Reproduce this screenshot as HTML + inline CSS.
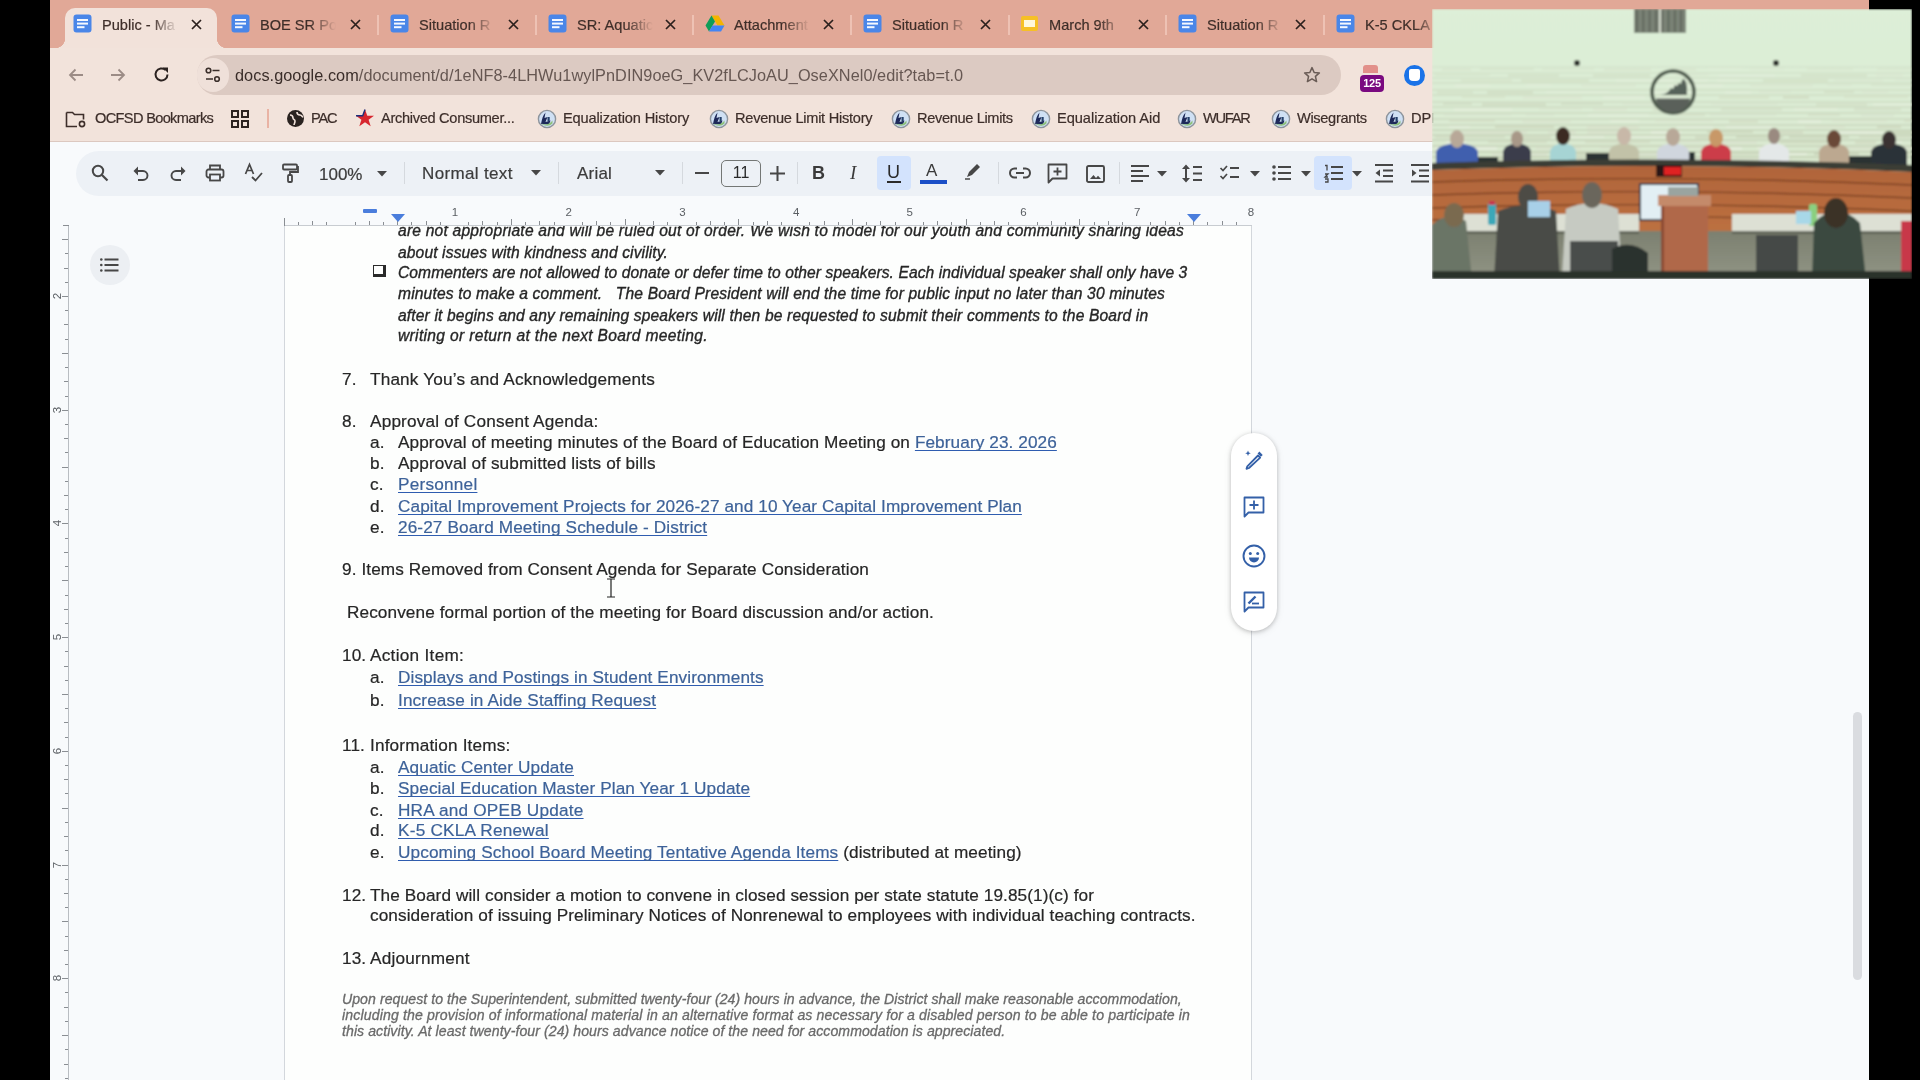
<!DOCTYPE html><html><head><meta charset="utf-8"><style>
*{margin:0;padding:0;box-sizing:border-box}
html,body{width:1920px;height:1080px;overflow:hidden;background:#f9fbfd;font-family:"Liberation Sans",sans-serif;position:relative}
.a{position:absolute}
svg{position:absolute;overflow:visible}
.tab{position:absolute;top:8px;height:40px;font-size:14.6px;color:#3b2a26;white-space:nowrap}
.tt{position:absolute;top:17px;overflow:hidden;white-space:nowrap;font-size:14.6px;color:#3e2e29;-webkit-text-stroke:0.2px #3e2e29;
 -webkit-mask-image:linear-gradient(90deg,#000 65%,transparent 100%)}
.tx{position:absolute;top:13px;font-size:18px;color:#2a1f1c;line-height:20px}
.sep{position:absolute;top:15px;width:2px;height:20px;background:#eec2b4}
.bm{position:absolute;top:110px;font-size:14.6px;color:#3d2e2a;-webkit-text-stroke:0.2px #3d2e2a;white-space:nowrap;line-height:16px}
.doc{position:absolute;font-size:17.2px;color:#262626;-webkit-text-stroke:0.2px #262626;white-space:nowrap;line-height:20px}
.lk{color:#3d6299;-webkit-text-stroke-color:#3d6299;text-decoration:underline;text-decoration-skip-ink:none;text-decoration-color:#2f5db0;text-underline-offset:2px;text-decoration-thickness:1.3px}
.it{position:absolute;font-style:italic;font-size:15.6px;color:#262626;-webkit-text-stroke:0.35px #262626;white-space:nowrap;line-height:20px}
.ft{position:absolute;font-style:italic;font-size:14.1px;color:#6a6a6a;-webkit-text-stroke:0.3px #6a6a6a;white-space:nowrap;line-height:16px}
</style></head><body><div id="root" style="position:absolute;left:0;top:0;width:1920px;height:1080px;overflow:hidden;filter:blur(0.4px)">
<div class="a" style="left:0;top:0;width:1920px;height:48px;background:#e1a897"></div>
<div class="a" style="left:65px;top:8px;width:152px;height:42px;background:#f2e2da;border-radius:10px 10px 0 0"></div>
<div class="a" style="left:55px;top:38px;width:10px;height:10px;background:radial-gradient(circle at 0 0,#e1a897 10px,#f2e2da 10.5px)"></div>
<div class="a" style="left:217px;top:38px;width:10px;height:10px;background:radial-gradient(circle at 100% 0,#e1a897 10px,#f2e2da 10.5px)"></div>
<svg style="left:73px;top:14px" width="19" height="19" viewBox="0 0 19 19"><rect x="0.5" y="0.5" width="18" height="18" rx="3" fill="#4a86e8"/><rect x="4" y="5" width="11" height="2" fill="#f4f8ff"/><rect x="4" y="8.6" width="11" height="2" fill="#f4f8ff"/><rect x="4" y="12.2" width="7.5" height="2" fill="#f4f8ff"/></svg>
<div class="tt" style="left:102px;width:76px">Public - Ma</div>
<svg style="left:191px;top:19px" width="11" height="11" viewBox="0 0 11 11"><path d="M1 1L10 10M10 1L1 10" stroke="#2b201d" stroke-width="1.7"/></svg>
<svg style="left:231px;top:14px" width="19" height="19" viewBox="0 0 19 19"><rect x="0.5" y="0.5" width="18" height="18" rx="3" fill="#4a86e8"/><rect x="4" y="5" width="11" height="2" fill="#f4f8ff"/><rect x="4" y="8.6" width="11" height="2" fill="#f4f8ff"/><rect x="4" y="12.2" width="7.5" height="2" fill="#f4f8ff"/></svg>
<div class="tt" style="left:260px;width:76px">BOE SR Pol</div>
<svg style="left:350px;top:19px" width="11" height="11" viewBox="0 0 11 11"><path d="M1 1L10 10M10 1L1 10" stroke="#2b201d" stroke-width="1.7"/></svg>
<svg style="left:390px;top:14px" width="19" height="19" viewBox="0 0 19 19"><rect x="0.5" y="0.5" width="18" height="18" rx="3" fill="#4a86e8"/><rect x="4" y="5" width="11" height="2" fill="#f4f8ff"/><rect x="4" y="8.6" width="11" height="2" fill="#f4f8ff"/><rect x="4" y="12.2" width="7.5" height="2" fill="#f4f8ff"/></svg>
<div class="tt" style="left:419px;width:76px">Situation R</div>
<svg style="left:508px;top:19px" width="11" height="11" viewBox="0 0 11 11"><path d="M1 1L10 10M10 1L1 10" stroke="#2b201d" stroke-width="1.7"/></svg>
<svg style="left:548px;top:14px" width="19" height="19" viewBox="0 0 19 19"><rect x="0.5" y="0.5" width="18" height="18" rx="3" fill="#4a86e8"/><rect x="4" y="5" width="11" height="2" fill="#f4f8ff"/><rect x="4" y="8.6" width="11" height="2" fill="#f4f8ff"/><rect x="4" y="12.2" width="7.5" height="2" fill="#f4f8ff"/></svg>
<div class="tt" style="left:577px;width:76px">SR: Aquatic</div>
<svg style="left:665px;top:19px" width="11" height="11" viewBox="0 0 11 11"><path d="M1 1L10 10M10 1L1 10" stroke="#2b201d" stroke-width="1.7"/></svg>
<svg style="left:705px;top:15px" width="20" height="17" viewBox="0 0 20 17"><path d="M6.5 0.5h7l6 10h-7z" fill="#f4b400"/><path d="M6.5 0.5l-6 10 3.5 6 6-10z" fill="#0f9d58"/><path d="M4 16.5h12l3.5-6h-12z" fill="#4285f4"/></svg>
<div class="tt" style="left:734px;width:76px">Attachment</div>
<svg style="left:823px;top:19px" width="11" height="11" viewBox="0 0 11 11"><path d="M1 1L10 10M10 1L1 10" stroke="#2b201d" stroke-width="1.7"/></svg>
<svg style="left:863px;top:14px" width="19" height="19" viewBox="0 0 19 19"><rect x="0.5" y="0.5" width="18" height="18" rx="3" fill="#4a86e8"/><rect x="4" y="5" width="11" height="2" fill="#f4f8ff"/><rect x="4" y="8.6" width="11" height="2" fill="#f4f8ff"/><rect x="4" y="12.2" width="7.5" height="2" fill="#f4f8ff"/></svg>
<div class="tt" style="left:892px;width:76px">Situation R</div>
<svg style="left:980px;top:19px" width="11" height="11" viewBox="0 0 11 11"><path d="M1 1L10 10M10 1L1 10" stroke="#2b201d" stroke-width="1.7"/></svg>
<div class="a" style="left:1021px;top:16px;width:17px;height:15px;background:#f6c026;border-radius:2px"><div class="a" style="left:3px;top:4px;width:11px;height:7px;background:#fff8dc"></div></div>
<div class="tt" style="left:1049px;width:76px">March 9th</div>
<svg style="left:1138px;top:19px" width="11" height="11" viewBox="0 0 11 11"><path d="M1 1L10 10M10 1L1 10" stroke="#2b201d" stroke-width="1.7"/></svg>
<svg style="left:1178px;top:14px" width="19" height="19" viewBox="0 0 19 19"><rect x="0.5" y="0.5" width="18" height="18" rx="3" fill="#4a86e8"/><rect x="4" y="5" width="11" height="2" fill="#f4f8ff"/><rect x="4" y="8.6" width="11" height="2" fill="#f4f8ff"/><rect x="4" y="12.2" width="7.5" height="2" fill="#f4f8ff"/></svg>
<div class="tt" style="left:1207px;width:76px">Situation R</div>
<svg style="left:1295px;top:19px" width="11" height="11" viewBox="0 0 11 11"><path d="M1 1L10 10M10 1L1 10" stroke="#2b201d" stroke-width="1.7"/></svg>
<svg style="left:1336px;top:14px" width="19" height="19" viewBox="0 0 19 19"><rect x="0.5" y="0.5" width="18" height="18" rx="3" fill="#4a86e8"/><rect x="4" y="5" width="11" height="2" fill="#f4f8ff"/><rect x="4" y="8.6" width="11" height="2" fill="#f4f8ff"/><rect x="4" y="12.2" width="7.5" height="2" fill="#f4f8ff"/></svg>
<div class="tt" style="left:1365px;width:76px">K-5 CKLA R</div>
<div class="sep" style="left:377px"></div>
<div class="sep" style="left:535px"></div>
<div class="sep" style="left:692px"></div>
<div class="sep" style="left:850px"></div>
<div class="sep" style="left:1008px"></div>
<div class="sep" style="left:1165px"></div>
<div class="sep" style="left:1323px"></div>
<div class="a" style="left:0;top:48px;width:1920px;height:93px;background:#f2e3db"></div>
<div class="a" style="left:0;top:141px;width:1920px;height:1px;background:#dcc8c0"></div>
<svg style="left:67px;top:66px" width="18" height="18" viewBox="0 0 18 18"><path d="M16 9H3M8.5 3.5L3 9l5.5 5.5" stroke="#9c8c86" stroke-width="1.8" fill="none"/></svg>
<svg style="left:109px;top:66px" width="18" height="18" viewBox="0 0 18 18"><path d="M2 9h13M9.5 3.5L15 9l-5.5 5.5" stroke="#9c8c86" stroke-width="1.8" fill="none"/></svg>
<svg style="left:152px;top:65px" width="19" height="19" viewBox="0 0 19 19"><path d="M15.5 9.5A6 6 0 1 1 13.6 5.1" stroke="#2b2220" stroke-width="2" fill="none"/><path d="M10.5 2.5h5.5v5.5z" fill="#2b2220"/></svg>
<div class="a" style="left:197px;top:55px;width:1144px;height:40px;background:#dccac2;border-radius:20px"></div>
<div class="a" style="left:197px;top:58px;width:32px;height:34px;background:#efe0d9;border-radius:17px"></div>
<svg style="left:204px;top:66px" width="18" height="18" viewBox="0 0 18 18"><circle cx="4.5" cy="4.5" r="2.3" stroke="#3a2e2a" stroke-width="1.6" fill="none"/><path d="M8.5 4.5h7M2 13h7" stroke="#3a2e2a" stroke-width="1.6"/><circle cx="13" cy="13" r="2.3" stroke="#3a2e2a" stroke-width="1.6" fill="none"/></svg>
<div class="a" style="left:235px;top:65px;font-size:16.3px;color:#3a2d29;white-space:nowrap;line-height:20px;letter-spacing:0.048px">docs.google.com<span style="color:#665752">/document/d/1eNF8-4LHWu1wylPnDIN9oeG_KV2fLCJoAU_OseXNel0/edit?tab=t.0</span></div>
<svg style="left:1303px;top:66px" width="18" height="18" viewBox="0 0 20 20"><path d="M10 1.8l2.4 5.4 5.8.5-4.4 3.9 1.3 5.7L10 14.3l-5.1 3 1.3-5.7L1.8 7.7l5.8-.5z" stroke="#6a5c56" stroke-width="1.7" fill="none" stroke-linejoin="round"/></svg>
<div class="a" style="left:1363px;top:65px;width:15px;height:8px;background:#e2908a;border-radius:3px 3px 0 0"></div>
<div class="a" style="left:1360px;top:75px;width:24px;height:17px;background:#7a0a80;border-radius:4px;color:#fff;font-size:11px;font-weight:bold;text-align:center;line-height:17px;letter-spacing:-0.3px">125</div>
<div class="a" style="left:1404px;top:65px;width:21px;height:21px;border-radius:50%;background:#1a73e8"><div class="a" style="left:5px;top:4px;width:11px;height:12px;background:#fff;border-radius:2px 2px 4px 4px"></div></div>
<svg style="left:65px;top:109px" width="22" height="20" viewBox="0 0 22 20"><path d="M1.5 3.5h6l2 2h9v5M12 17.5H1.5v-14" stroke="#3d2e2a" stroke-width="1.6" fill="none"/><circle cx="17" cy="15" r="2.6" stroke="#3d2e2a" stroke-width="1.6" fill="none"/></svg>
<div class="bm" style="left:95px;letter-spacing:-0.664px">OCFSD Bookmarks</div>
<svg style="left:231px;top:110px" width="18" height="18" viewBox="0 0 18 18"><rect x="1" y="1" width="6" height="6" stroke="#2d2320" stroke-width="2" fill="none"/><rect x="11" y="1" width="6" height="6" stroke="#2d2320" stroke-width="2" fill="none"/><rect x="1" y="11" width="6" height="6" stroke="#2d2320" stroke-width="2" fill="none"/><rect x="11" y="11" width="6" height="6" stroke="#2d2320" stroke-width="2" fill="none"/></svg>
<div class="a" style="left:267px;top:109px;width:2px;height:19px;background:#e9b3a4"></div>
<div class="a" style="left:287px;top:110px;width:17px;height:17px;border-radius:50%;background:#2a2320"></div>
<svg style="left:287px;top:110px" width="17" height="17" viewBox="0 0 17 17"><path d="M3 5c2 0 3 1 3 3s2 1 2 3-1 3-1 4M10 2c0 2 1 3 3 3s2 2 3 2" stroke="#f2e3db" stroke-width="1.6" fill="none"/></svg>
<div class="bm" style="left:311px;letter-spacing:-1.250px">PAC</div>
<svg style="left:355px;top:109px" width="20" height="19" viewBox="0 0 20 19"><path d="M10 0.5l2.3 6.2H19l-5.4 4 2.1 6.6L10 13.3l-5.7 4 2.1-6.6L1 6.7h6.7z" fill="#d7262e"/><path d="M1 6.7h6.7L10 0.5" stroke="#1b2f7a" stroke-width="1.4" fill="none"/></svg>
<div class="bm" style="left:381px;letter-spacing:-0.305px">Archived Consumer...</div>
<svg style="left:537px;top:109px" width="20" height="20" viewBox="0 0 20 20"><circle cx="10" cy="10" r="8.6" fill="#cfe0f4" stroke="#8d949c" stroke-width="1.4"/><path d="M4 15c1-5 2-9 4.5-11.5L7.5 9l3-1-2 5 5-1.5-1.5 4z" fill="#1e2a5a"/><path d="M4.5 14.5q6 3 11-3v3q-4 4-10 1z" fill="#8dc07a"/><rect x="10.5" y="8" width="2.2" height="4" fill="#23406a"/></svg>
<div class="bm" style="left:563px;letter-spacing:-0.147px">Equalization History</div>
<svg style="left:709px;top:109px" width="20" height="20" viewBox="0 0 20 20"><circle cx="10" cy="10" r="8.6" fill="#cfe0f4" stroke="#8d949c" stroke-width="1.4"/><path d="M4 15c1-5 2-9 4.5-11.5L7.5 9l3-1-2 5 5-1.5-1.5 4z" fill="#1e2a5a"/><path d="M4.5 14.5q6 3 11-3v3q-4 4-10 1z" fill="#8dc07a"/><rect x="10.5" y="8" width="2.2" height="4" fill="#23406a"/></svg>
<div class="bm" style="left:735px;letter-spacing:-0.260px">Revenue Limit History</div>
<svg style="left:891px;top:109px" width="20" height="20" viewBox="0 0 20 20"><circle cx="10" cy="10" r="8.6" fill="#cfe0f4" stroke="#8d949c" stroke-width="1.4"/><path d="M4 15c1-5 2-9 4.5-11.5L7.5 9l3-1-2 5 5-1.5-1.5 4z" fill="#1e2a5a"/><path d="M4.5 14.5q6 3 11-3v3q-4 4-10 1z" fill="#8dc07a"/><rect x="10.5" y="8" width="2.2" height="4" fill="#23406a"/></svg>
<div class="bm" style="left:917px;letter-spacing:-0.346px">Revenue Limits</div>
<svg style="left:1031px;top:109px" width="20" height="20" viewBox="0 0 20 20"><circle cx="10" cy="10" r="8.6" fill="#cfe0f4" stroke="#8d949c" stroke-width="1.4"/><path d="M4 15c1-5 2-9 4.5-11.5L7.5 9l3-1-2 5 5-1.5-1.5 4z" fill="#1e2a5a"/><path d="M4.5 14.5q6 3 11-3v3q-4 4-10 1z" fill="#8dc07a"/><rect x="10.5" y="8" width="2.2" height="4" fill="#23406a"/></svg>
<div class="bm" style="left:1057px;letter-spacing:-0.033px">Equalization Aid</div>
<svg style="left:1177px;top:109px" width="20" height="20" viewBox="0 0 20 20"><circle cx="10" cy="10" r="8.6" fill="#cfe0f4" stroke="#8d949c" stroke-width="1.4"/><path d="M4 15c1-5 2-9 4.5-11.5L7.5 9l3-1-2 5 5-1.5-1.5 4z" fill="#1e2a5a"/><path d="M4.5 14.5q6 3 11-3v3q-4 4-10 1z" fill="#8dc07a"/><rect x="10.5" y="8" width="2.2" height="4" fill="#23406a"/></svg>
<div class="bm" style="left:1203px;letter-spacing:-1.250px">WUFAR</div>
<svg style="left:1271px;top:109px" width="20" height="20" viewBox="0 0 20 20"><circle cx="10" cy="10" r="8.6" fill="#cfe0f4" stroke="#8d949c" stroke-width="1.4"/><path d="M4 15c1-5 2-9 4.5-11.5L7.5 9l3-1-2 5 5-1.5-1.5 4z" fill="#1e2a5a"/><path d="M4.5 14.5q6 3 11-3v3q-4 4-10 1z" fill="#8dc07a"/><rect x="10.5" y="8" width="2.2" height="4" fill="#23406a"/></svg>
<div class="bm" style="left:1297px;letter-spacing:-0.333px">Wisegrants</div>
<svg style="left:1385px;top:109px" width="20" height="20" viewBox="0 0 20 20"><circle cx="10" cy="10" r="8.6" fill="#cfe0f4" stroke="#8d949c" stroke-width="1.4"/><path d="M4 15c1-5 2-9 4.5-11.5L7.5 9l3-1-2 5 5-1.5-1.5 4z" fill="#1e2a5a"/><path d="M4.5 14.5q6 3 11-3v3q-4 4-10 1z" fill="#8dc07a"/><rect x="10.5" y="8" width="2.2" height="4" fill="#23406a"/></svg>
<div class="bm" style="left:1411px">DPI</div>
<div class="a" style="left:50px;top:142px;width:1870px;height:938px;background:#f8fafc"></div>
<div class="a" style="left:76px;top:151px;width:1400px;height:45px;background:#edf1f6;border-radius:23px"></div>
<svg style="left:91px;top:164px" width="18" height="18" viewBox="0 0 18 18"><circle cx="7" cy="7" r="5.2" stroke="#474747" stroke-width="2" fill="none"/><path d="M11 11l5.5 5.5" stroke="#474747" stroke-width="2.2"/></svg>
<svg style="left:132px;top:165px" width="18" height="16" viewBox="0 0 18 16"><path d="M4 6h7a4.5 4.5 0 0 1 0 9H6" stroke="#474747" stroke-width="1.9" fill="none"/><path d="M1.5 6L6 1.5v9z" fill="#474747"/></svg>
<svg style="left:169px;top:165px" width="18" height="16" viewBox="0 0 18 16"><path d="M14 6H7a4.5 4.5 0 0 0 0 9h5" stroke="#474747" stroke-width="1.9" fill="none"/><path d="M16.5 6L12 1.5v9z" fill="#474747"/></svg>
<svg style="left:205px;top:164px" width="20" height="18" viewBox="0 0 20 18"><path d="M5 5V1.5h10V5" stroke="#474747" stroke-width="1.8" fill="none"/><rect x="1.5" y="5.5" width="17" height="8" rx="2" stroke="#474747" stroke-width="1.8" fill="none"/><rect x="5" y="10.5" width="10" height="6" stroke="#474747" stroke-width="1.8" fill="#edf2fa"/></svg>
<svg style="left:244px;top:163px" width="20" height="20" viewBox="0 0 20 20"><path d="M1.5 11L5.5 1.5 9.5 11M3 7.5h5" stroke="#474747" stroke-width="1.7" fill="none"/><path d="M8 14l3.5 3.5L18 10" stroke="#474747" stroke-width="1.8" fill="none"/></svg>
<svg style="left:281px;top:163px" width="18" height="21" viewBox="0 0 18 21"><rect x="2" y="1.5" width="14" height="5" rx="1" stroke="#474747" stroke-width="1.8" fill="none"/><path d="M16 4h1v5H9v3" stroke="#474747" stroke-width="1.8" fill="none"/><rect x="7" y="12" width="4" height="7" rx="1" stroke="#474747" stroke-width="1.8" fill="none"/></svg>
<div class="a" style="left:319px;top:165px;font-size:17px;color:#3c3c3c;line-height:20px;-webkit-text-stroke:0.2px #3c3c3c">100%</div>
<svg style="left:377px;top:171px" width="10" height="6" viewBox="0 0 10 6"><path d="M0 0h10L5 5.5z" fill="#474747"/></svg>
<div class="a" style="left:404px;top:162px;width:1px;height:22px;background:#d5d9de"></div>
<div class="a" style="left:422px;top:164px;font-size:17px;color:#3c3c3c;line-height:20px;letter-spacing:0.35px;-webkit-text-stroke:0.2px #3c3c3c">Normal text</div>
<svg style="left:531px;top:170px" width="10" height="6" viewBox="0 0 10 6"><path d="M0 0h10L5 5.5z" fill="#474747"/></svg>
<div class="a" style="left:558px;top:162px;width:1px;height:22px;background:#d5d9de"></div>
<div class="a" style="left:577px;top:164px;font-size:17px;color:#3c3c3c;line-height:20px;letter-spacing:0.2px;-webkit-text-stroke:0.2px #3c3c3c">Arial</div>
<svg style="left:655px;top:170px" width="10" height="6" viewBox="0 0 10 6"><path d="M0 0h10L5 5.5z" fill="#474747"/></svg>
<div class="a" style="left:682px;top:162px;width:1px;height:22px;background:#d5d9de"></div>
<svg style="left:695px;top:172px" width="14" height="3" viewBox="0 0 14 3"><rect width="14" height="2" fill="#474747"/></svg>
<div class="a" style="left:721px;top:160px;width:40px;height:27px;border:1.5px solid #747775;border-radius:5px;font-size:16px;color:#2a2a2a;text-align:center;line-height:24px">11</div>
<svg style="left:770px;top:166px" width="15" height="15" viewBox="0 0 15 15"><path d="M7.5 0v15M0 7.5h15" stroke="#474747" stroke-width="2"/></svg>
<div class="a" style="left:797px;top:162px;width:1px;height:22px;background:#d5d9de"></div>
<div class="a" style="left:812px;top:163px;font-size:18px;font-weight:bold;color:#3a3a3a;line-height:20px">B</div>
<div class="a" style="left:850px;top:163px;font-size:19px;font-style:italic;font-family:Liberation Serif;color:#3a3a3a;line-height:20px">I</div>
<div class="a" style="left:877px;top:156px;width:34px;height:34px;background:#d3e3fd;border-radius:4px"></div>
<div class="a" style="left:887px;top:162px;font-size:18px;color:#2a2a2a;line-height:20px">U</div>
<div class="a" style="left:887px;top:181px;width:14px;height:2px;background:#2a2a2a"></div>
<div class="a" style="left:926px;top:161px;font-size:17px;color:#3a3a3a;line-height:20px">A</div>
<div class="a" style="left:920px;top:180px;width:27px;height:4px;background:#1b4fc7"></div>
<svg style="left:964px;top:163px" width="20" height="17" viewBox="0 0 20 17"><path d="M3 14l2-5 8-8 3 3-8 8z" fill="#474747"/><path d="M1 16h5" stroke="#474747" stroke-width="1.5"/></svg>
<div class="a" style="left:998px;top:162px;width:1px;height:22px;background:#d5d9de"></div>
<svg style="left:1009px;top:167px" width="22" height="12" viewBox="0 0 22 12"><path d="M8 1.5H5.5a4.5 4.5 0 0 0 0 9H8M14 1.5h2.5a4.5 4.5 0 0 1 0 9H14M7 6h8" stroke="#474747" stroke-width="2" fill="none"/></svg>
<svg style="left:1047px;top:163px" width="21" height="21" viewBox="0 0 21 21"><path d="M1.5 1.5h18v14h-14l-4 4z" stroke="#474747" stroke-width="1.8" fill="none" stroke-linejoin="round"/><path d="M10.5 4.5v8M6.5 8.5h8" stroke="#474747" stroke-width="1.8"/></svg>
<svg style="left:1086px;top:165px" width="19" height="18" viewBox="0 0 19 18"><rect x="1" y="1" width="17" height="16" rx="1.5" stroke="#474747" stroke-width="1.9" fill="none"/><path d="M4 14l3.5-4 2.5 3 2-2.2 3 3.2z" fill="#474747"/></svg>
<div class="a" style="left:1119px;top:162px;width:1px;height:22px;background:#d5d9de"></div>
<svg style="left:1131px;top:165px" width="19" height="17" viewBox="0 0 19 17"><path d="M0 1h18M0 6h12M0 11h18M0 16h12" stroke="#474747" stroke-width="2"/></svg>
<svg style="left:1157px;top:171px" width="10" height="6" viewBox="0 0 10 6"><path d="M0 0h10L5 5.5z" fill="#474747"/></svg>
<svg style="left:1182px;top:164px" width="20" height="19" viewBox="0 0 20 19"><path d="M4 2v15" stroke="#474747" stroke-width="2"/><path d="M0 5l4-4.5L8 5zM0 14l4 4.5L8 14z" fill="#474747"/><path d="M11 3h9M11 9.5h9M11 16h9" stroke="#474747" stroke-width="2"/></svg>
<svg style="left:1220px;top:165px" width="20" height="15" viewBox="0 0 20 15"><path d="M0.5 3l2.5 2.5L7 1M0.5 11l2.5 2.5L7 9" stroke="#474747" stroke-width="1.7" fill="none"/><path d="M10 3h9M10 12h9" stroke="#474747" stroke-width="2"/></svg>
<svg style="left:1250px;top:171px" width="10" height="6" viewBox="0 0 10 6"><path d="M0 0h10L5 5.5z" fill="#474747"/></svg>
<svg style="left:1272px;top:165px" width="19" height="16" viewBox="0 0 19 16"><circle cx="2" cy="2" r="1.8" fill="#474747"/><circle cx="2" cy="8" r="1.8" fill="#474747"/><circle cx="2" cy="14" r="1.8" fill="#474747"/><path d="M6 2h13M6 8h13M6 14h13" stroke="#474747" stroke-width="2"/></svg>
<svg style="left:1301px;top:171px" width="10" height="6" viewBox="0 0 10 6"><path d="M0 0h10L5 5.5z" fill="#474747"/></svg>
<div class="a" style="left:1314px;top:156px;width:38px;height:34px;background:#d3e3fd;border-radius:4px"></div>
<svg style="left:1324px;top:164px" width="19" height="18" viewBox="0 0 19 18"><path d="M1 1.5h2v5M1 10h3l-3 3h3M1 15h3v3H1" stroke="#474747" stroke-width="1.3" fill="none"/><path d="M7 3h12M7 9h12M7 15h12" stroke="#474747" stroke-width="2"/></svg>
<svg style="left:1352px;top:171px" width="10" height="6" viewBox="0 0 10 6"><path d="M0 0h10L5 5.5z" fill="#474747"/></svg>
<svg style="left:1375px;top:164px" width="19" height="19" viewBox="0 0 19 19"><path d="M0 1h18M8 6.5h10M8 12h10M0 17.5h18" stroke="#474747" stroke-width="2"/><path d="M5 5.5v7L0.5 9z" fill="#474747"/></svg>
<svg style="left:1411px;top:164px" width="19" height="19" viewBox="0 0 19 19"><path d="M0 1h18M8 6.5h10M8 12h10M0 17.5h18" stroke="#474747" stroke-width="2"/><path d="M1 5.5v7L5.5 9z" fill="#474747"/></svg>
<div class="a" style="left:284px;top:225px;width:968px;height:1px;background:#c8ccd1"></div>
<div class="a" style="left:297.7px;top:222px;width:1px;height:3px;background:#8a8e93"></div><div class="a" style="left:311.9px;top:221px;width:1px;height:4px;background:#8a8e93"></div><div class="a" style="left:326.1px;top:222px;width:1px;height:3px;background:#8a8e93"></div><div class="a" style="left:354.5px;top:222px;width:1px;height:3px;background:#8a8e93"></div><div class="a" style="left:368.7px;top:221px;width:1px;height:4px;background:#8a8e93"></div><div class="a" style="left:382.9px;top:222px;width:1px;height:3px;background:#8a8e93"></div><div class="a" style="left:397.2px;top:219px;width:1px;height:6px;background:#8a8e93"></div><div class="a" style="left:411.4px;top:222px;width:1px;height:3px;background:#8a8e93"></div><div class="a" style="left:425.6px;top:221px;width:1px;height:4px;background:#8a8e93"></div><div class="a" style="left:439.8px;top:222px;width:1px;height:3px;background:#8a8e93"></div><div class="a" style="left:468.2px;top:222px;width:1px;height:3px;background:#8a8e93"></div><div class="a" style="left:482.4px;top:221px;width:1px;height:4px;background:#8a8e93"></div><div class="a" style="left:496.6px;top:222px;width:1px;height:3px;background:#8a8e93"></div><div class="a" style="left:510.9px;top:219px;width:1px;height:6px;background:#8a8e93"></div><div class="a" style="left:525.1px;top:222px;width:1px;height:3px;background:#8a8e93"></div><div class="a" style="left:539.3px;top:221px;width:1px;height:4px;background:#8a8e93"></div><div class="a" style="left:553.5px;top:222px;width:1px;height:3px;background:#8a8e93"></div><div class="a" style="left:581.9px;top:222px;width:1px;height:3px;background:#8a8e93"></div><div class="a" style="left:596.1px;top:221px;width:1px;height:4px;background:#8a8e93"></div><div class="a" style="left:610.3px;top:222px;width:1px;height:3px;background:#8a8e93"></div><div class="a" style="left:624.5px;top:219px;width:1px;height:6px;background:#8a8e93"></div><div class="a" style="left:638.8px;top:222px;width:1px;height:3px;background:#8a8e93"></div><div class="a" style="left:653.0px;top:221px;width:1px;height:4px;background:#8a8e93"></div><div class="a" style="left:667.2px;top:222px;width:1px;height:3px;background:#8a8e93"></div><div class="a" style="left:695.6px;top:222px;width:1px;height:3px;background:#8a8e93"></div><div class="a" style="left:709.8px;top:221px;width:1px;height:4px;background:#8a8e93"></div><div class="a" style="left:724.0px;top:222px;width:1px;height:3px;background:#8a8e93"></div><div class="a" style="left:738.2px;top:219px;width:1px;height:6px;background:#8a8e93"></div><div class="a" style="left:752.5px;top:222px;width:1px;height:3px;background:#8a8e93"></div><div class="a" style="left:766.7px;top:221px;width:1px;height:4px;background:#8a8e93"></div><div class="a" style="left:780.9px;top:222px;width:1px;height:3px;background:#8a8e93"></div><div class="a" style="left:809.3px;top:222px;width:1px;height:3px;background:#8a8e93"></div><div class="a" style="left:823.5px;top:221px;width:1px;height:4px;background:#8a8e93"></div><div class="a" style="left:837.7px;top:222px;width:1px;height:3px;background:#8a8e93"></div><div class="a" style="left:852.0px;top:219px;width:1px;height:6px;background:#8a8e93"></div><div class="a" style="left:866.2px;top:222px;width:1px;height:3px;background:#8a8e93"></div><div class="a" style="left:880.4px;top:221px;width:1px;height:4px;background:#8a8e93"></div><div class="a" style="left:894.6px;top:222px;width:1px;height:3px;background:#8a8e93"></div><div class="a" style="left:923.0px;top:222px;width:1px;height:3px;background:#8a8e93"></div><div class="a" style="left:937.2px;top:221px;width:1px;height:4px;background:#8a8e93"></div><div class="a" style="left:951.4px;top:222px;width:1px;height:3px;background:#8a8e93"></div><div class="a" style="left:965.7px;top:219px;width:1px;height:6px;background:#8a8e93"></div><div class="a" style="left:979.9px;top:222px;width:1px;height:3px;background:#8a8e93"></div><div class="a" style="left:994.1px;top:221px;width:1px;height:4px;background:#8a8e93"></div><div class="a" style="left:1008.3px;top:222px;width:1px;height:3px;background:#8a8e93"></div><div class="a" style="left:1036.7px;top:222px;width:1px;height:3px;background:#8a8e93"></div><div class="a" style="left:1050.9px;top:221px;width:1px;height:4px;background:#8a8e93"></div><div class="a" style="left:1065.1px;top:222px;width:1px;height:3px;background:#8a8e93"></div><div class="a" style="left:1079.4px;top:219px;width:1px;height:6px;background:#8a8e93"></div><div class="a" style="left:1093.6px;top:222px;width:1px;height:3px;background:#8a8e93"></div><div class="a" style="left:1107.8px;top:221px;width:1px;height:4px;background:#8a8e93"></div><div class="a" style="left:1122.0px;top:222px;width:1px;height:3px;background:#8a8e93"></div><div class="a" style="left:1150.4px;top:222px;width:1px;height:3px;background:#8a8e93"></div><div class="a" style="left:1164.6px;top:221px;width:1px;height:4px;background:#8a8e93"></div><div class="a" style="left:1178.8px;top:222px;width:1px;height:3px;background:#8a8e93"></div><div class="a" style="left:1193.0px;top:219px;width:1px;height:6px;background:#8a8e93"></div><div class="a" style="left:1207.3px;top:222px;width:1px;height:3px;background:#8a8e93"></div><div class="a" style="left:1221.5px;top:221px;width:1px;height:4px;background:#8a8e93"></div><div class="a" style="left:1235.7px;top:222px;width:1px;height:3px;background:#8a8e93"></div>
<div class="a" style="left:284px;top:218px;width:1px;height:8px;background:#8a8e93"></div>
<div class="a" style="left:450.0px;top:206px;width:10px;text-align:center;font-size:11.5px;color:#5a5e63;line-height:12px">1</div>
<div class="a" style="left:563.7px;top:206px;width:10px;text-align:center;font-size:11.5px;color:#5a5e63;line-height:12px">2</div>
<div class="a" style="left:677.4px;top:206px;width:10px;text-align:center;font-size:11.5px;color:#5a5e63;line-height:12px">3</div>
<div class="a" style="left:791.1px;top:206px;width:10px;text-align:center;font-size:11.5px;color:#5a5e63;line-height:12px">4</div>
<div class="a" style="left:904.8px;top:206px;width:10px;text-align:center;font-size:11.5px;color:#5a5e63;line-height:12px">5</div>
<div class="a" style="left:1018.5px;top:206px;width:10px;text-align:center;font-size:11.5px;color:#5a5e63;line-height:12px">6</div>
<div class="a" style="left:1132.2px;top:206px;width:10px;text-align:center;font-size:11.5px;color:#5a5e63;line-height:12px">7</div>
<div class="a" style="left:1245.9px;top:206px;width:10px;text-align:center;font-size:11.5px;color:#5a5e63;line-height:12px">8</div>
<div class="a" style="left:363px;top:209px;width:14px;height:4px;background:#4a7ddc;border-radius:1px"></div>
<svg style="left:391px;top:214px" width="14" height="9" viewBox="0 0 14 9"><path d="M0 0h14L7 8z" fill="#4a7ddc"/></svg>
<svg style="left:1187px;top:214px" width="14" height="9" viewBox="0 0 14 9"><path d="M0 0h14L7 8z" fill="#4a7ddc"/></svg>
<div class="a" style="left:68px;top:225px;width:1px;height:855px;background:#b9bdc2"></div>
<div class="a" style="left:63px;top:225px;width:6px;height:1px;background:#8a8e93"></div>
<div class="a" style="left:62px;top:239.2px;width:6px;height:1px;background:#8a8e93"></div><div class="a" style="left:65px;top:253.4px;width:3px;height:1px;background:#8a8e93"></div><div class="a" style="left:64px;top:267.6px;width:4px;height:1px;background:#8a8e93"></div><div class="a" style="left:65px;top:281.8px;width:3px;height:1px;background:#8a8e93"></div><div class="a" style="left:65px;top:310.2px;width:3px;height:1px;background:#8a8e93"></div><div class="a" style="left:64px;top:324.4px;width:4px;height:1px;background:#8a8e93"></div><div class="a" style="left:65px;top:338.6px;width:3px;height:1px;background:#8a8e93"></div><div class="a" style="left:62px;top:352.9px;width:6px;height:1px;background:#8a8e93"></div><div class="a" style="left:65px;top:367.1px;width:3px;height:1px;background:#8a8e93"></div><div class="a" style="left:64px;top:381.3px;width:4px;height:1px;background:#8a8e93"></div><div class="a" style="left:65px;top:395.5px;width:3px;height:1px;background:#8a8e93"></div><div class="a" style="left:65px;top:423.9px;width:3px;height:1px;background:#8a8e93"></div><div class="a" style="left:64px;top:438.1px;width:4px;height:1px;background:#8a8e93"></div><div class="a" style="left:65px;top:452.3px;width:3px;height:1px;background:#8a8e93"></div><div class="a" style="left:62px;top:466.6px;width:6px;height:1px;background:#8a8e93"></div><div class="a" style="left:65px;top:480.8px;width:3px;height:1px;background:#8a8e93"></div><div class="a" style="left:64px;top:495.0px;width:4px;height:1px;background:#8a8e93"></div><div class="a" style="left:65px;top:509.2px;width:3px;height:1px;background:#8a8e93"></div><div class="a" style="left:65px;top:537.6px;width:3px;height:1px;background:#8a8e93"></div><div class="a" style="left:64px;top:551.8px;width:4px;height:1px;background:#8a8e93"></div><div class="a" style="left:65px;top:566.0px;width:3px;height:1px;background:#8a8e93"></div><div class="a" style="left:62px;top:580.2px;width:6px;height:1px;background:#8a8e93"></div><div class="a" style="left:65px;top:594.5px;width:3px;height:1px;background:#8a8e93"></div><div class="a" style="left:64px;top:608.7px;width:4px;height:1px;background:#8a8e93"></div><div class="a" style="left:65px;top:622.9px;width:3px;height:1px;background:#8a8e93"></div><div class="a" style="left:65px;top:651.3px;width:3px;height:1px;background:#8a8e93"></div><div class="a" style="left:64px;top:665.5px;width:4px;height:1px;background:#8a8e93"></div><div class="a" style="left:65px;top:679.7px;width:3px;height:1px;background:#8a8e93"></div><div class="a" style="left:62px;top:694.0px;width:6px;height:1px;background:#8a8e93"></div><div class="a" style="left:65px;top:708.2px;width:3px;height:1px;background:#8a8e93"></div><div class="a" style="left:64px;top:722.4px;width:4px;height:1px;background:#8a8e93"></div><div class="a" style="left:65px;top:736.6px;width:3px;height:1px;background:#8a8e93"></div><div class="a" style="left:65px;top:765.0px;width:3px;height:1px;background:#8a8e93"></div><div class="a" style="left:64px;top:779.2px;width:4px;height:1px;background:#8a8e93"></div><div class="a" style="left:65px;top:793.4px;width:3px;height:1px;background:#8a8e93"></div><div class="a" style="left:62px;top:807.7px;width:6px;height:1px;background:#8a8e93"></div><div class="a" style="left:65px;top:821.9px;width:3px;height:1px;background:#8a8e93"></div><div class="a" style="left:64px;top:836.1px;width:4px;height:1px;background:#8a8e93"></div><div class="a" style="left:65px;top:850.3px;width:3px;height:1px;background:#8a8e93"></div><div class="a" style="left:65px;top:878.7px;width:3px;height:1px;background:#8a8e93"></div><div class="a" style="left:64px;top:892.9px;width:4px;height:1px;background:#8a8e93"></div><div class="a" style="left:65px;top:907.1px;width:3px;height:1px;background:#8a8e93"></div><div class="a" style="left:62px;top:921.4px;width:6px;height:1px;background:#8a8e93"></div><div class="a" style="left:65px;top:935.6px;width:3px;height:1px;background:#8a8e93"></div><div class="a" style="left:64px;top:949.8px;width:4px;height:1px;background:#8a8e93"></div><div class="a" style="left:65px;top:964.0px;width:3px;height:1px;background:#8a8e93"></div><div class="a" style="left:65px;top:992.4px;width:3px;height:1px;background:#8a8e93"></div><div class="a" style="left:64px;top:1006.6px;width:4px;height:1px;background:#8a8e93"></div><div class="a" style="left:65px;top:1020.8px;width:3px;height:1px;background:#8a8e93"></div><div class="a" style="left:62px;top:1035.1px;width:6px;height:1px;background:#8a8e93"></div><div class="a" style="left:65px;top:1049.3px;width:3px;height:1px;background:#8a8e93"></div><div class="a" style="left:64px;top:1063.5px;width:4px;height:1px;background:#8a8e93"></div><div class="a" style="left:65px;top:1077.7px;width:3px;height:1px;background:#8a8e93"></div>
<div class="a" style="left:51px;top:290.0px;width:12px;height:12px;font-size:11.5px;color:#5a5e63;line-height:12px;text-align:center;transform:rotate(-90deg)">2</div>
<div class="a" style="left:62px;top:296.0px;width:6px;height:1px;background:#8a8e93"></div>
<div class="a" style="left:51px;top:403.7px;width:12px;height:12px;font-size:11.5px;color:#5a5e63;line-height:12px;text-align:center;transform:rotate(-90deg)">3</div>
<div class="a" style="left:62px;top:409.7px;width:6px;height:1px;background:#8a8e93"></div>
<div class="a" style="left:51px;top:517.4px;width:12px;height:12px;font-size:11.5px;color:#5a5e63;line-height:12px;text-align:center;transform:rotate(-90deg)">4</div>
<div class="a" style="left:62px;top:523.4px;width:6px;height:1px;background:#8a8e93"></div>
<div class="a" style="left:51px;top:631.1px;width:12px;height:12px;font-size:11.5px;color:#5a5e63;line-height:12px;text-align:center;transform:rotate(-90deg)">5</div>
<div class="a" style="left:62px;top:637.1px;width:6px;height:1px;background:#8a8e93"></div>
<div class="a" style="left:51px;top:744.8px;width:12px;height:12px;font-size:11.5px;color:#5a5e63;line-height:12px;text-align:center;transform:rotate(-90deg)">6</div>
<div class="a" style="left:62px;top:750.8px;width:6px;height:1px;background:#8a8e93"></div>
<div class="a" style="left:51px;top:858.5px;width:12px;height:12px;font-size:11.5px;color:#5a5e63;line-height:12px;text-align:center;transform:rotate(-90deg)">7</div>
<div class="a" style="left:62px;top:864.5px;width:6px;height:1px;background:#8a8e93"></div>
<div class="a" style="left:51px;top:972.2px;width:12px;height:12px;font-size:11.5px;color:#5a5e63;line-height:12px;text-align:center;transform:rotate(-90deg)">8</div>
<div class="a" style="left:62px;top:978.2px;width:6px;height:1px;background:#8a8e93"></div>
<div class="a" style="left:90px;top:245px;width:40px;height:40px;border-radius:50%;background:#eceff3"></div>
<svg style="left:100px;top:258px" width="20" height="14" viewBox="0 0 20 14"><circle cx="1.3" cy="1.5" r="1.3" fill="#474747"/><circle cx="1.3" cy="7" r="1.3" fill="#474747"/><circle cx="1.3" cy="12.5" r="1.3" fill="#474747"/><path d="M4.5 1.5h14M4.5 7h14M4.5 12.5h14" stroke="#474747" stroke-width="2"/></svg>
<div class="a" style="left:284px;top:226px;width:968px;height:854px;background:#fdfefd;border-left:1px solid #d3d7dc;border-right:1px solid #d3d7dc"></div>
<div class="a" style="left:285px;top:226px;width:966px;height:130px;overflow:hidden">
<div class="it" style="left:113px;top:-5.3px;letter-spacing:0.211px">are not appropriate and will be ruled out of order. We wish to model for our youth and community sharing ideas</div>
<div class="it" style="left:113px;top:16.5px;letter-spacing:0.128px">about issues with kindness and civility.</div>
<div class="it" style="left:113px;top:37.3px;letter-spacing:0.091px">Commenters are not allowed to donate or defer time to other speakers. Each individual speaker shall only have 3</div>
<div class="it" style="left:113px;top:58.3px;letter-spacing:0.159px">minutes to make a comment.&nbsp;&nbsp; The Board President will end the time for public input no later than 30 minutes</div>
<div class="it" style="left:113px;top:79.7px;letter-spacing:0.152px">after it begins and any remaining speakers will then be requested to submit their comments to the Board in</div>
<div class="it" style="left:113px;top:100.3px;letter-spacing:0.326px">writing or return at the next Board meeting.</div>
</div>
<div class="a" style="left:373px;top:265px;width:13px;height:12px;border:1.4px solid #2a2a2a;border-right-width:3px;border-bottom-width:3px"></div>
<div class="doc" style="left:342px;top:368.5px;letter-spacing:0.100px">7.</div>
<div class="doc" style="left:370px;top:368.5px;letter-spacing:0.165px">Thank You’s and Acknowledgements</div>
<div class="doc" style="left:342px;top:411.4px;letter-spacing:0.100px">8.</div>
<div class="doc" style="left:370px;top:411.4px;letter-spacing:0.177px">Approval of Consent Agenda:</div>
<div class="doc" style="left:370px;top:432.0px;letter-spacing:0.100px">a.</div>
<div class="doc" style="left:398px;top:432.0px;letter-spacing:0.088px">Approval of meeting minutes of the Board of Education Meeting on <span class="lk">February 23. 2026</span></div>
<div class="doc" style="left:370px;top:453.0px;letter-spacing:0.100px">b.</div>
<div class="doc" style="left:398px;top:453.0px;letter-spacing:0.100px">Approval of submitted lists of bills</div>
<div class="doc" style="left:370px;top:474.0px;letter-spacing:0.100px">c.</div>
<div class="doc" style="left:398px;top:474.0px;letter-spacing:0.225px"><span class="lk">Personnel</span></div>
<div class="doc" style="left:370px;top:495.5px;letter-spacing:0.100px">d.</div>
<div class="doc" style="left:398px;top:495.5px;letter-spacing:0.087px"><span class="lk">Capital Improvement Projects for 2026-27 and 10 Year Capital Improvement Plan</span></div>
<div class="doc" style="left:370px;top:516.8px;letter-spacing:0.100px">e.</div>
<div class="doc" style="left:398px;top:516.8px;letter-spacing:0.113px"><span class="lk">26-27 Board Meeting Schedule - District</span></div>
<div class="doc" style="left:342px;top:559.0px;letter-spacing:0.100px">9. Items Removed from Consent Agenda for Separate Consideration</div>
<div class="doc" style="left:347px;top:601.6px;letter-spacing:0.093px">Reconvene formal portion of the meeting for Board discussion and/or action.</div>
<div class="doc" style="left:342px;top:644.5px;letter-spacing:0.100px">10.</div>
<div class="doc" style="left:370px;top:644.5px;letter-spacing:0.282px">Action Item:</div>
<div class="doc" style="left:370px;top:667.3px;letter-spacing:0.100px">a.</div>
<div class="doc" style="left:398px;top:667.3px;letter-spacing:0.100px"><span class="lk">Displays and Postings in Student Environments</span></div>
<div class="doc" style="left:370px;top:690.2px;letter-spacing:0.100px">b.</div>
<div class="doc" style="left:398px;top:690.2px;letter-spacing:0.131px"><span class="lk">Increase in Aide Staffing Request</span></div>
<div class="doc" style="left:342px;top:735.2px;letter-spacing:0.100px">11.</div>
<div class="doc" style="left:370px;top:735.2px;letter-spacing:0.159px">Information Items:</div>
<div class="doc" style="left:370px;top:756.9px;letter-spacing:0.100px">a.</div>
<div class="doc" style="left:398px;top:756.9px;letter-spacing:0.100px"><span class="lk">Aquatic Center Update</span></div>
<div class="doc" style="left:370px;top:778.0px;letter-spacing:0.100px">b.</div>
<div class="doc" style="left:398px;top:778.0px;letter-spacing:0.100px"><span class="lk">Special Education Master Plan Year 1 Update</span></div>
<div class="doc" style="left:370px;top:799.7px;letter-spacing:0.100px">c.</div>
<div class="doc" style="left:398px;top:799.7px;letter-spacing:0.211px"><span class="lk">HRA and OPEB Update</span></div>
<div class="doc" style="left:370px;top:820.2px;letter-spacing:0.100px">d.</div>
<div class="doc" style="left:398px;top:820.2px;letter-spacing:0.233px"><span class="lk">K-5 CKLA Renewal</span></div>
<div class="doc" style="left:370px;top:841.9px;letter-spacing:0.100px">e.</div>
<div class="doc" style="left:398px;top:841.9px;letter-spacing:0.113px"><span class="lk">Upcoming School Board Meeting Tentative Agenda Items</span> (distributed at meeting)</div>
<div class="doc" style="left:342px;top:884.8px;letter-spacing:0.100px">12.</div>
<div class="doc" style="left:370px;top:884.8px;letter-spacing:0.089px">The Board will consider a motion to convene in closed session per state statute 19.85(1)(c) for</div>
<div class="doc" style="left:370px;top:904.8px;letter-spacing:0.091px">consideration of issuing Preliminary Notices of Nonrenewal to employees with individual teaching contracts.</div>
<div class="doc" style="left:342px;top:947.7px;letter-spacing:0.100px">13.</div>
<div class="doc" style="left:370px;top:947.7px;letter-spacing:0.200px">Adjournment</div>
<div class="ft" style="left:342px;top:990.8px;letter-spacing:0.054px">Upon request to the Superintendent, submitted twenty-four (24) hours in advance, the District shall make reasonable accommodation,</div>
<div class="ft" style="left:342px;top:1006.5px;letter-spacing:0.139px">including the provision of informational material in an alternative format as necessary for a disabled person to be able to participate in</div>
<div class="ft" style="left:342px;top:1023.3px;letter-spacing:0.063px">this activity. At least twenty-four (24) hours advance notice of the need for accommodation is appreciated.</div>
<svg style="left:606px;top:578px" width="10" height="20" viewBox="0 0 10 20"><path d="M1 1h8M5 1v18M1 19h8" stroke="#222" stroke-width="1.2" fill="none"/></svg>
<div class="a" style="left:1231px;top:433px;width:46px;height:198px;background:#fff;border-radius:23px;box-shadow:0 1px 4px rgba(0,0,0,.22),0 2px 8px rgba(0,0,0,.08)"></div>
<svg style="left:1243px;top:449px" width="22" height="22" viewBox="0 0 22 22"><path d="M6 19l-2.5.8.8-2.5L15 6.5 17.2 8.7z" stroke="#3460a8" stroke-width="1.8" fill="none" stroke-linejoin="round"/><path d="M15.5 3.5l3.3 3.3" stroke="#3460a8" stroke-width="2.6"/><path d="M5 1.5l.8 2 2 .8-2 .8L5 7.1l-.8-2-2-.8 2-.8z" fill="#3460a8"/></svg>
<svg style="left:1243px;top:496px" width="22" height="22" viewBox="0 0 22 22"><path d="M1.5 1.5h19v15h-15l-4 4z" stroke="#3460a8" stroke-width="1.8" fill="none" stroke-linejoin="round"/><path d="M11 4.5v9M6.5 9h9" stroke="#3460a8" stroke-width="1.8"/></svg>
<svg style="left:1242px;top:544px" width="24" height="24" viewBox="0 0 24 24"><circle cx="12" cy="12" r="10.5" stroke="#3460a8" stroke-width="1.9" fill="none"/><circle cx="8.3" cy="9.5" r="1.5" fill="#3460a8"/><circle cx="15.7" cy="9.5" r="1.5" fill="#3460a8"/><path d="M7 13.5a5 5 0 0 0 10 0z" fill="#3460a8"/></svg>
<svg style="left:1243px;top:591px" width="22" height="22" viewBox="0 0 22 22"><path d="M1.5 1.5h19v15h-15l-4 4z" stroke="#3460a8" stroke-width="1.8" fill="none" stroke-linejoin="round"/><path d="M5.5 12.5l7-7" stroke="#3460a8" stroke-width="2.4"/><path d="M9 12.5h7" stroke="#3460a8" stroke-width="1.8"/></svg>
<div class="a" style="left:1853px;top:712px;width:9px;height:268px;background:#dadce0;border-radius:5px"></div>
<div class="a" style="left:0;top:0;width:50px;height:1080px;background:#000"></div>
<div class="a" style="left:1869px;top:0;width:51px;height:1080px;background:#000"></div>
<svg style="left:1432px;top:9px;overflow:hidden" width="480" height="270" viewBox="0 0 480 270"><defs><linearGradient id="wall" x1="0" y1="0" x2="0" y2="1"><stop offset="0" stop-color="#ddefd8"/><stop offset="0.4" stop-color="#dcecd4"/><stop offset="1" stop-color="#d0dcbe"/></linearGradient><linearGradient id="wood" x1="0" y1="0" x2="0" y2="1"><stop offset="0" stop-color="#b0643a"/><stop offset="1" stop-color="#bc7040"/></linearGradient><linearGradient id="flr" x1="0" y1="0" x2="0" y2="1"><stop offset="0" stop-color="#7c8070"/><stop offset="1" stop-color="#8e9282"/></linearGradient><filter id="bl" x="-5%" y="-5%" width="110%" height="110%"><feGaussianBlur stdDeviation="0.8"/></filter></defs><g filter="url(#bl)"><rect x="0" y="0" width="480" height="270" fill="url(#wall)"/><path d="M0 58.0h480" stroke="#aeb89c" stroke-width="1.1" opacity="0.25"/><rect x="10" y="59.0" width="29" height="3" fill="#cfd8bf" opacity="0.25"/><rect x="48" y="59.0" width="54" height="2" fill="#c6cfb4" opacity="0.25"/><rect x="110" y="59.0" width="52" height="2" fill="#cfd8bf" opacity="0.25"/><rect x="172" y="59.0" width="47" height="3" fill="#cfd8bf" opacity="0.25"/><rect x="239" y="59.0" width="25" height="3" fill="#cfd8bf" opacity="0.25"/><rect x="276" y="59.0" width="34" height="2" fill="#e8efdf" opacity="0.25"/><rect x="318" y="59.0" width="34" height="2" fill="#d8e0cc" opacity="0.25"/><rect x="375" y="59.0" width="46" height="2" fill="#cfd8bf" opacity="0.25"/><rect x="445" y="59.0" width="55" height="2" fill="#cfd8bf" opacity="0.25"/><path d="M0 64.0h480" stroke="#aeb89c" stroke-width="1.1" opacity="0.29"/><rect x="3" y="65.0" width="55" height="2" fill="#cfd8bf" opacity="0.29"/><rect x="76" y="65.0" width="51" height="3" fill="#c6cfb4" opacity="0.29"/><rect x="161" y="65.0" width="57" height="3" fill="#c6cfb4" opacity="0.29"/><rect x="242" y="65.0" width="35" height="2" fill="#d8e0cc" opacity="0.29"/><rect x="287" y="65.0" width="56" height="3" fill="#e8efdf" opacity="0.29"/><rect x="369" y="65.0" width="66" height="3" fill="#c6cfb4" opacity="0.29"/><rect x="444" y="65.0" width="27" height="3" fill="#d8e0cc" opacity="0.29"/><path d="M0 69.0h480" stroke="#aeb89c" stroke-width="1.1" opacity="0.32"/><rect x="29" y="70.0" width="51" height="3" fill="#cfd8bf" opacity="0.32"/><rect x="89" y="70.0" width="68" height="3" fill="#c6cfb4" opacity="0.32"/><rect x="184" y="70.0" width="58" height="3" fill="#e8efdf" opacity="0.32"/><rect x="251" y="70.0" width="25" height="3" fill="#e8efdf" opacity="0.32"/><rect x="285" y="70.0" width="23" height="3" fill="#e8efdf" opacity="0.32"/><rect x="331" y="70.0" width="65" height="3" fill="#c6cfb4" opacity="0.32"/><rect x="402" y="70.0" width="49" height="3" fill="#d8e0cc" opacity="0.32"/><rect x="463" y="70.0" width="51" height="2" fill="#d8e0cc" opacity="0.32"/><path d="M0 74.0h480" stroke="#aeb89c" stroke-width="1.1" opacity="0.35"/><rect x="23" y="75.0" width="35" height="3" fill="#e8efdf" opacity="0.35"/><rect x="94" y="75.0" width="25" height="2" fill="#e8efdf" opacity="0.35"/><rect x="149" y="75.0" width="55" height="3" fill="#d8e0cc" opacity="0.35"/><rect x="236" y="75.0" width="55" height="3" fill="#e8efdf" opacity="0.35"/><rect x="318" y="75.0" width="63" height="3" fill="#d8e0cc" opacity="0.35"/><rect x="395" y="75.0" width="25" height="2" fill="#d8e0cc" opacity="0.35"/><rect x="439" y="75.0" width="62" height="2" fill="#cfd8bf" opacity="0.35"/><path d="M0 81.0h480" stroke="#aeb89c" stroke-width="1.1" opacity="0.39"/><rect x="5" y="82.0" width="36" height="3" fill="#cfd8bf" opacity="0.39"/><rect x="55" y="82.0" width="46" height="3" fill="#c6cfb4" opacity="0.39"/><rect x="114" y="82.0" width="64" height="2" fill="#e8efdf" opacity="0.39"/><rect x="218" y="82.0" width="45" height="3" fill="#e8efdf" opacity="0.39"/><rect x="293" y="82.0" width="26" height="3" fill="#e8efdf" opacity="0.39"/><rect x="327" y="82.0" width="32" height="2" fill="#d8e0cc" opacity="0.39"/><rect x="392" y="82.0" width="30" height="2" fill="#c6cfb4" opacity="0.39"/><rect x="430" y="82.0" width="26" height="2" fill="#d8e0cc" opacity="0.39"/><path d="M0 86.0h480" stroke="#aeb89c" stroke-width="1.1" opacity="0.42"/><rect x="30" y="87.0" width="43" height="2" fill="#cfd8bf" opacity="0.42"/><rect x="91" y="87.0" width="59" height="3" fill="#d8e0cc" opacity="0.42"/><rect x="171" y="87.0" width="42" height="3" fill="#e8efdf" opacity="0.42"/><rect x="225" y="87.0" width="27" height="3" fill="#e8efdf" opacity="0.42"/><rect x="287" y="87.0" width="50" height="3" fill="#cfd8bf" opacity="0.42"/><rect x="351" y="87.0" width="26" height="3" fill="#c6cfb4" opacity="0.42"/><rect x="412" y="87.0" width="64" height="2" fill="#cfd8bf" opacity="0.42"/><path d="M0 93.0h480" stroke="#aeb89c" stroke-width="1.1" opacity="0.46"/><rect x="11" y="94.0" width="29" height="2" fill="#c6cfb4" opacity="0.46"/><rect x="50" y="94.0" width="64" height="3" fill="#c6cfb4" opacity="0.46"/><rect x="129" y="94.0" width="42" height="2" fill="#c6cfb4" opacity="0.46"/><rect x="190" y="94.0" width="59" height="2" fill="#d8e0cc" opacity="0.46"/><rect x="279" y="94.0" width="67" height="2" fill="#d8e0cc" opacity="0.46"/><rect x="384" y="94.0" width="51" height="3" fill="#cfd8bf" opacity="0.46"/><rect x="441" y="94.0" width="70" height="3" fill="#e8efdf" opacity="0.46"/><path d="M0 98.0h480" stroke="#aeb89c" stroke-width="1.1" opacity="0.49"/><rect x="22" y="99.0" width="58" height="3" fill="#e8efdf" opacity="0.49"/><rect x="107" y="99.0" width="43" height="2" fill="#d8e0cc" opacity="0.49"/><rect x="161" y="99.0" width="34" height="3" fill="#d8e0cc" opacity="0.49"/><rect x="221" y="99.0" width="33" height="3" fill="#cfd8bf" opacity="0.49"/><rect x="289" y="99.0" width="61" height="3" fill="#cfd8bf" opacity="0.49"/><rect x="362" y="99.0" width="44" height="2" fill="#e8efdf" opacity="0.49"/><rect x="422" y="99.0" width="47" height="3" fill="#cfd8bf" opacity="0.49"/><path d="M0 104.0h480" stroke="#aeb89c" stroke-width="1.1" opacity="0.53"/><rect x="12" y="105.0" width="67" height="2" fill="#d8e0cc" opacity="0.53"/><rect x="94" y="105.0" width="28" height="2" fill="#d8e0cc" opacity="0.53"/><rect x="156" y="105.0" width="61" height="2" fill="#e8efdf" opacity="0.53"/><rect x="244" y="105.0" width="29" height="2" fill="#cfd8bf" opacity="0.53"/><rect x="278" y="105.0" width="66" height="2" fill="#d8e0cc" opacity="0.53"/><rect x="376" y="105.0" width="32" height="2" fill="#cfd8bf" opacity="0.53"/><rect x="429" y="105.0" width="33" height="3" fill="#d8e0cc" opacity="0.53"/><path d="M0 110.0h480" stroke="#aeb89c" stroke-width="1.1" opacity="0.56"/><rect x="17" y="111.0" width="46" height="2" fill="#cfd8bf" opacity="0.56"/><rect x="90" y="111.0" width="49" height="3" fill="#d8e0cc" opacity="0.56"/><rect x="178" y="111.0" width="29" height="2" fill="#e8efdf" opacity="0.56"/><rect x="223" y="111.0" width="58" height="2" fill="#d8e0cc" opacity="0.56"/><rect x="297" y="111.0" width="29" height="3" fill="#cfd8bf" opacity="0.56"/><rect x="366" y="111.0" width="23" height="3" fill="#e8efdf" opacity="0.56"/><rect x="400" y="111.0" width="55" height="2" fill="#d8e0cc" opacity="0.56"/><rect x="472" y="111.0" width="37" height="2" fill="#cfd8bf" opacity="0.56"/><path d="M0 116.0h480" stroke="#aeb89c" stroke-width="1.1" opacity="0.60"/><rect x="17" y="117.0" width="21" height="2" fill="#e8efdf" opacity="0.60"/><rect x="63" y="117.0" width="59" height="2" fill="#c6cfb4" opacity="0.60"/><rect x="155" y="117.0" width="52" height="3" fill="#d8e0cc" opacity="0.60"/><rect x="245" y="117.0" width="36" height="2" fill="#e8efdf" opacity="0.60"/><rect x="294" y="117.0" width="46" height="2" fill="#e8efdf" opacity="0.60"/><rect x="373" y="117.0" width="40" height="2" fill="#d8e0cc" opacity="0.60"/><rect x="445" y="117.0" width="24" height="2" fill="#c6cfb4" opacity="0.60"/><path d="M0 121.0h480" stroke="#aeb89c" stroke-width="1.1" opacity="0.63"/><rect x="30" y="122.0" width="65" height="3" fill="#d8e0cc" opacity="0.63"/><rect x="116" y="122.0" width="28" height="3" fill="#d8e0cc" opacity="0.63"/><rect x="155" y="122.0" width="45" height="3" fill="#d8e0cc" opacity="0.63"/><rect x="219" y="122.0" width="30" height="3" fill="#e8efdf" opacity="0.63"/><rect x="275" y="122.0" width="46" height="2" fill="#c6cfb4" opacity="0.63"/><rect x="346" y="122.0" width="25" height="3" fill="#cfd8bf" opacity="0.63"/><rect x="397" y="122.0" width="55" height="3" fill="#e8efdf" opacity="0.63"/><rect x="458" y="122.0" width="44" height="3" fill="#c6cfb4" opacity="0.63"/><path d="M0 126.0h480" stroke="#aeb89c" stroke-width="1.1" opacity="0.66"/><rect x="3" y="127.0" width="70" height="2" fill="#cfd8bf" opacity="0.66"/><rect x="83" y="127.0" width="36" height="3" fill="#cfd8bf" opacity="0.66"/><rect x="135" y="127.0" width="37" height="2" fill="#e8efdf" opacity="0.66"/><rect x="193" y="127.0" width="45" height="2" fill="#e8efdf" opacity="0.66"/><rect x="263" y="127.0" width="25" height="3" fill="#cfd8bf" opacity="0.66"/><rect x="304" y="127.0" width="47" height="2" fill="#c6cfb4" opacity="0.66"/><rect x="357" y="127.0" width="60" height="2" fill="#c6cfb4" opacity="0.66"/><rect x="427" y="127.0" width="58" height="2" fill="#cfd8bf" opacity="0.66"/><path d="M0 131.0h480" stroke="#aeb89c" stroke-width="1.1" opacity="0.69"/><rect x="14" y="132.0" width="20" height="3" fill="#e8efdf" opacity="0.69"/><rect x="56" y="132.0" width="59" height="2" fill="#cfd8bf" opacity="0.69"/><rect x="153" y="132.0" width="65" height="2" fill="#cfd8bf" opacity="0.69"/><rect x="233" y="132.0" width="36" height="2" fill="#d8e0cc" opacity="0.69"/><rect x="286" y="132.0" width="39" height="3" fill="#d8e0cc" opacity="0.69"/><rect x="348" y="132.0" width="48" height="2" fill="#c6cfb4" opacity="0.69"/><rect x="423" y="132.0" width="21" height="3" fill="#cfd8bf" opacity="0.69"/><rect x="449" y="132.0" width="21" height="2" fill="#e8efdf" opacity="0.69"/><path d="M0 137.0h480" stroke="#aeb89c" stroke-width="1.1" opacity="0.72"/><rect x="3" y="138.0" width="62" height="3" fill="#e8efdf" opacity="0.72"/><rect x="104" y="138.0" width="45" height="3" fill="#d8e0cc" opacity="0.72"/><rect x="168" y="138.0" width="41" height="2" fill="#d8e0cc" opacity="0.72"/><rect x="239" y="138.0" width="42" height="2" fill="#d8e0cc" opacity="0.72"/><rect x="286" y="138.0" width="24" height="3" fill="#e8efdf" opacity="0.72"/><rect x="325" y="138.0" width="23" height="2" fill="#e8efdf" opacity="0.72"/><rect x="385" y="138.0" width="62" height="3" fill="#d8e0cc" opacity="0.72"/><rect x="470" y="138.0" width="22" height="3" fill="#d8e0cc" opacity="0.72"/><path d="M0 143.0h480" stroke="#aeb89c" stroke-width="1.1" opacity="0.76"/><rect x="14" y="144.0" width="20" height="3" fill="#c6cfb4" opacity="0.76"/><rect x="60" y="144.0" width="55" height="3" fill="#d8e0cc" opacity="0.76"/><rect x="122" y="144.0" width="39" height="2" fill="#c6cfb4" opacity="0.76"/><rect x="177" y="144.0" width="20" height="3" fill="#e8efdf" opacity="0.76"/><rect x="207" y="144.0" width="50" height="3" fill="#d8e0cc" opacity="0.76"/><rect x="277" y="144.0" width="52" height="2" fill="#cfd8bf" opacity="0.76"/><rect x="350" y="144.0" width="25" height="2" fill="#e8efdf" opacity="0.76"/><rect x="382" y="144.0" width="45" height="2" fill="#c6cfb4" opacity="0.76"/><rect x="451" y="144.0" width="60" height="2" fill="#cfd8bf" opacity="0.76"/><path d="M0 148.0h480" stroke="#aeb89c" stroke-width="1.1" opacity="0.79"/><rect x="21" y="149.0" width="65" height="3" fill="#c6cfb4" opacity="0.79"/><rect x="122" y="149.0" width="29" height="3" fill="#d8e0cc" opacity="0.79"/><rect x="158" y="149.0" width="65" height="3" fill="#d8e0cc" opacity="0.79"/><rect x="261" y="149.0" width="68" height="2" fill="#d8e0cc" opacity="0.79"/><rect x="339" y="149.0" width="21" height="2" fill="#d8e0cc" opacity="0.79"/><rect x="388" y="149.0" width="26" height="3" fill="#e8efdf" opacity="0.79"/><rect x="454" y="149.0" width="23" height="2" fill="#d8e0cc" opacity="0.79"/><rect x="202" y="0" width="52" height="24" fill="#7a8276"/><rect x="227" y="0" width="2" height="24" fill="#d8dfd0"/><path d="M205.0 1v22" stroke="#5a6257" stroke-width="1.6"/><path d="M211.3 1v22" stroke="#5a6257" stroke-width="1.6"/><path d="M217.6 1v22" stroke="#5a6257" stroke-width="1.6"/><path d="M223.9 1v22" stroke="#5a6257" stroke-width="1.6"/><path d="M230.2 1v22" stroke="#5a6257" stroke-width="1.6"/><path d="M236.5 1v22" stroke="#5a6257" stroke-width="1.6"/><path d="M242.8 1v22" stroke="#5a6257" stroke-width="1.6"/><path d="M249.1 1v22" stroke="#5a6257" stroke-width="1.6"/><circle cx="145" cy="54" r="3" fill="#2a2e2a"/><circle cx="344" cy="54" r="3" fill="#2a2e2a"/><circle cx="241" cy="83" r="21" stroke="#4c584c" stroke-width="3.6" fill="none"/><path d="M227 86 q6 0 10 -4 l2 -3 2 1 2 -4 2 1 2 -3 2 1 1 -4 2 -1 2 3 1 5 v8 h-28z" fill="#56625a"/><path d="M224 89.5 h34 a17 14 0 0 1 -34 0z" fill="#5a605a"/><rect x="44" y="148" width="22" height="10" fill="#2c3032"/><rect x="154" y="144" width="24" height="10" fill="#2c3032"/><rect x="237" y="143" width="26" height="10" fill="#2c3032"/><rect x="329" y="145" width="26" height="10" fill="#2c3032"/><rect x="414" y="147" width="26" height="10" fill="#2c3032"/><path d="M4 156 v-12 q0-8 21 -10 q21 2 21 10 v12z" fill="#3f5eae"/><ellipse cx="25" cy="130" rx="7" ry="9" fill="#b8a898"/><path d="M71 156 v-12 q0-8 14 -10 q14 2 14 10 v12z" fill="#3a3c4c"/><ellipse cx="85" cy="130" rx="6" ry="8" fill="#a89888"/><path d="M118 156 v-12 q0-8 13 -10 q13 2 13 10 v12z" fill="#a6d4d4"/><ellipse cx="131" cy="127" rx="7" ry="9" fill="#3a2a22"/><path d="M177 156 v-12 q0-8 15 -10 q15 2 15 10 v12z" fill="#c2c2a8"/><ellipse cx="192" cy="127" rx="7" ry="9" fill="#c8b8a8"/><path d="M225 156 v-12 q0-8 16 -10 q16 2 16 10 v12z" fill="#d0d6de"/><ellipse cx="241" cy="128" rx="7" ry="9" fill="#b8a898"/><path d="M269 156 v-12 q0-8 15 -10 q15 2 15 10 v12z" fill="#cc3c4a"/><ellipse cx="284" cy="129" rx="7" ry="9" fill="#c89868"/><path d="M327 156 v-12 q0-8 15 -10 q15 2 15 10 v12z" fill="#e4e8e8"/><ellipse cx="342" cy="127" rx="6" ry="8" fill="#9a8a80"/><path d="M387 156 v-12 q0-8 15 -10 q15 2 15 10 v12z" fill="#bca890"/><ellipse cx="402" cy="130" rx="7" ry="9" fill="#6a4a38"/><path d="M439 156 v-12 q0-8 18 -10 q18 2 18 10 v12z" fill="#2c3038"/><ellipse cx="457" cy="131" rx="7" ry="9" fill="#3a3230"/><path d="M0 154 Q240 146 480 156 L480 163 Q240 152 0 161z" fill="#3a3e36"/><path d="M0 161 Q240 152 480 163 L480 222 L0 222z" fill="url(#wood)"/><path d="M0 173 Q240 165 480 176" stroke="#6a3418" stroke-width="1.4" fill="none" opacity="0.75"/><path d="M0 186 Q240 178 480 189" stroke="#6a3418" stroke-width="1.4" fill="none" opacity="0.75"/><path d="M0 199 Q240 191 480 202" stroke="#6a3418" stroke-width="1.4" fill="none" opacity="0.75"/><path d="M0 211 Q240 203 480 214" stroke="#6a3418" stroke-width="1.4" fill="none" opacity="0.75"/><rect x="224" y="156" width="26" height="12" fill="#2a1414"/><rect x="232" y="158" width="17" height="8" fill="#e02424"/><rect x="207" y="174" width="60" height="38" fill="#2a3a48"/><rect x="209" y="176" width="56" height="34" fill="#e2eff4"/><rect x="0" y="222" width="480" height="42" fill="url(#flr)"/><rect x="15" y="205" width="192" height="18" fill="#dde0d4"/><rect x="10" y="222" width="197" height="3" fill="#62665a"/><rect x="300" y="205" width="180" height="18" fill="#dde0d4"/><rect x="300" y="222" width="180" height="3" fill="#62665a"/><rect x="229" y="186" width="47" height="80" fill="#b0684a"/><rect x="226" y="186" width="53" height="11" fill="#c48a6a"/><rect x="229" y="197" width="3" height="69" fill="#8a4a30"/><rect x="236" y="178" width="30" height="9" fill="#9aa4a0"/><path d="M0 216 q14 -14 34 -4 l6 58 H0z" fill="#6a7466"/><ellipse cx="22" cy="206" rx="10" ry="12" fill="#7a6a50"/><path d="M66 202 q28 -12 58 0 l4 68 h-66z" fill="#484c46"/><ellipse cx="96" cy="188" rx="10" ry="13" fill="#4e4c44"/><rect x="96" y="192" width="22" height="16" fill="#a8d0e8"/><path d="M134 200 q26 -12 52 0 l4 70 h-60z" fill="#c6cac2"/><ellipse cx="160" cy="186" rx="10" ry="13" fill="#6a665c"/><rect x="138" y="232" width="48" height="38" fill="#4a4e4c"/><path d="M180 240 q18 -10 36 4 v26 h-36z" fill="#2c302e"/><rect x="56" y="194" width="8" height="22" rx="2" fill="#3aa8b8"/><rect x="57" y="192" width="6" height="4" fill="#c83050"/><rect x="377" y="195" width="8" height="22" rx="2" fill="#8ad080"/><rect x="364" y="202" width="15" height="13" fill="#a8d8e8"/><path d="M382 214 q22 -24 46 0 l6 56 h-54z" fill="#3a4a40"/><ellipse cx="404" cy="204" rx="12" ry="15" fill="#3a3028"/><rect x="324" y="226" width="42" height="44" fill="#444a46"/><rect x="469" y="212" width="11" height="58" fill="#c83848"/><rect x="0" y="262" width="480" height="8" fill="#2c302c"/></g></svg>
</div></body></html>
